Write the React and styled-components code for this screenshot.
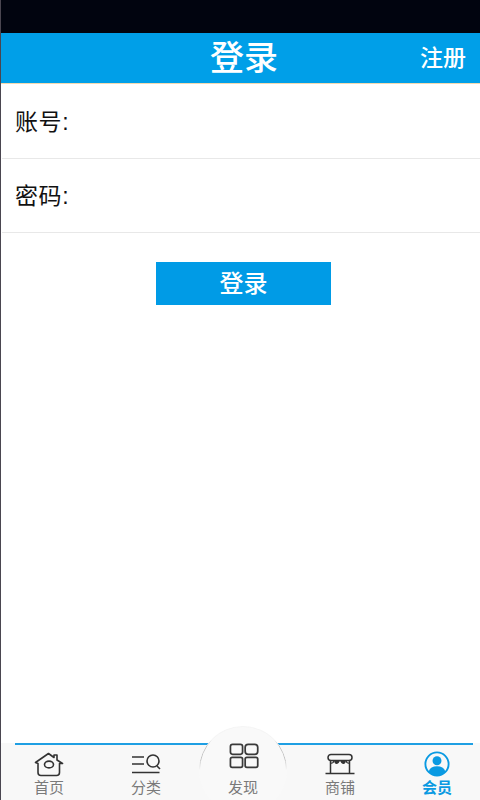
import React from 'react'
import styled, { createGlobalStyle } from 'styled-components'

const GlobalStyle = createGlobalStyle`
  html, body { margin: 0; padding: 0; background: #fff; }
  body { font-family: "Liberation Sans", "Noto Sans CJK SC", sans-serif; }
`

const Page = styled.div`
  width: 480px;
  height: 800px;
  display: flex;
  flex-direction: column;
  overflow: hidden;
  background: #fff;
  border-left: 1.5px solid #4a4650;
  box-sizing: border-box;
`
const StatusBar = styled.div`
  height: 33px;
  flex: none;
  margin-left: -1.5px;
  background: #01040f;
`
const Header = styled.header`
  height: 50px;
  flex: none;
  display: flex;
  align-items: center;
  justify-content: space-between;
  padding: 0 14px 0 0;
  background: #009fe8;
  border-bottom: 1px solid #f3d9b0;
  color: #fff;
`
const Title = styled.h1`
  flex: 1;
  margin: 0 0 0 67px;
  font-size: 34px;
  font-weight: 500;
  text-align: center;
  line-height: 50px;
`
const Register = styled.span`
  font-size: 23px;
  font-weight: 500;
  line-height: 50px;
`
const Form = styled.main`
  flex: 1;
  display: flex;
  flex-direction: column;
  padding-top: 1px;
`
const Field = styled.div`
  height: 74px;
  margin-left: 1px;
  padding: 0 0 3px 13px;
  box-sizing: border-box;
  display: flex;
  align-items: center;
  border-bottom: 1px solid #e8e8e8;
  font-size: 23px;
  letter-spacing: 0.6px;
  color: #111;
`
const SubmitButton = styled.button`
  align-self: flex-start;
  width: 175px;
  height: 43px;
  margin: 29px 0 0 155px;
  padding: 0 0 4px;
  border: 0;
  background: #009be6;
  color: #fff;
  font: inherit;
  font-size: 24px;
  font-weight: 500;
`
const TabBar = styled.nav`
  flex: none;
  height: 57px;
  position: relative;
  display: grid;
  grid-template-columns: repeat(5, 60px);
  column-gap: 37px;
  padding-left: 18px;
  background: #f8f8f8;
  box-sizing: border-box;
  &::before {
    content: '';
    position: absolute;
    left: 14px;
    width: 458px;
    top: 0;
    height: 1.5px;
    background: #1f9fe3;
  }
`
const FoundBump = styled.div`
  position: absolute;
  left: 198px;
  top: -17px;
  width: 88px;
  height: 88px;
  border-radius: 50%;
  background: #f9f9f9;
  &::before {
    content: '';
    position: absolute;
    inset: 0;
    border-radius: 50%;
    border: 1.5px solid #c4c4c4;
    box-sizing: border-box;
    mask-image: linear-gradient(to bottom, rgba(0, 0, 0, 0.08) 0 14px, #000 20px, #000 34px, transparent 44px);
  }
`
const Tab = styled.div`
  position: relative;
  display: flex;
  flex-direction: column;
  align-items: center;
  justify-content: flex-end;
  height: 54px;
  font-size: 15px;
  line-height: 18px;
  font-weight: ${p => (p.$active ? 700 : 400)};
  color: ${p => (p.$active ? '#0a9ae2' : '#7a7a7a')};
  svg { display: block; margin-bottom: ${p => (p.$raised ? '10px' : '2px')}; }
`

const HomeIcon = () => (
  <svg width="30" height="26" viewBox="0 0 30 26" fill="none" stroke="#333" strokeWidth="1.6" strokeLinejoin="round">
    <path d="M1.5 11.5 L14.5 2.5 L20 6.5 V4 H23 V9 L28.5 12.5 L25.5 12.5 V21.5 Q25.5 24.5 22.5 24.5 H7 Q4 24.5 4 21.5 V12.5 Z" />
    <ellipse cx="15" cy="13.5" rx="4.5" ry="3.4" />
  </svg>
)
const CategoryIcon = () => (
  <svg width="30" height="26" viewBox="0 0 30 26" fill="none" stroke="#333" strokeWidth="1.6">
    <path d="M1 6 H13 M1 13 H13 M1 21.5 H28.5" />
    <circle cx="22" cy="10" r="6" />
    <path d="M26 15 L29 18" />
  </svg>
)
const FoundIcon = () => (
  <svg width="36" height="30" viewBox="0 0 36 30" fill="none" stroke="#3a3a3a" strokeWidth="2">
    <rect x="3.5" y="1.5" width="14" height="11.5" rx="2.5" />
    <rect x="20.5" y="1.5" width="14.5" height="11.5" rx="3.5" />
    <rect x="3.5" y="16.5" width="14" height="11.5" rx="2" />
    <rect x="20.5" y="16.5" width="14.5" height="11.5" rx="2" />
  </svg>
)
const ShopIcon = () => (
  <svg width="30" height="26" viewBox="0 0 30 26" fill="none" stroke="#333" strokeWidth="1.5">
    <rect x="3" y="3.5" width="24" height="6" rx="3" />
    <path d="M5.5 9.5 V22 M24.5 9.5 V22 M0.5 22.5 H29.5" />
    <path d="M9 9.5 Q9.5 13.5 12 13 Q14 12.5 15 9.5 Q16 12.5 18 13 Q20.5 13.5 21 9.5 Z" fill="#333" stroke="none" />
    <path d="M5.5 12 Q8 13 9 9.5 M24.5 12 Q22 13 21 9.5" strokeWidth="1.2" />
  </svg>
)
const MemberIcon = () => (
  <svg width="28" height="26" viewBox="0 0 28 28">
    <circle cx="14" cy="14" r="12.5" fill="none" stroke="#0a9ae2" strokeWidth="2" />
    <circle cx="14" cy="10.5" r="4.8" fill="#0a9ae2" />
    <path d="M5 22 Q7 16.5 14 16.5 Q21 16.5 23 22 Q19 26.5 14 26.5 Q9 26.5 5 22 Z" fill="#0a9ae2" />
  </svg>
)

export default function App() {
  return (
    <Page>
      <GlobalStyle />
      <StatusBar />
      <Header>
        <Title>登录</Title>
        <Register>注册</Register>
      </Header>
      <Form>
        <Field>账号:</Field>
        <Field>密码:</Field>
        <SubmitButton type="button">登录</SubmitButton>
      </Form>
      <TabBar>
        <FoundBump />
        <Tab><HomeIcon />首页</Tab>
        <Tab><CategoryIcon />分类</Tab>
        <Tab $raised><FoundIcon />发现</Tab>
        <Tab><ShopIcon />商铺</Tab>
        <Tab $active><MemberIcon />会员</Tab>
      </TabBar>
    </Page>
  )
}
